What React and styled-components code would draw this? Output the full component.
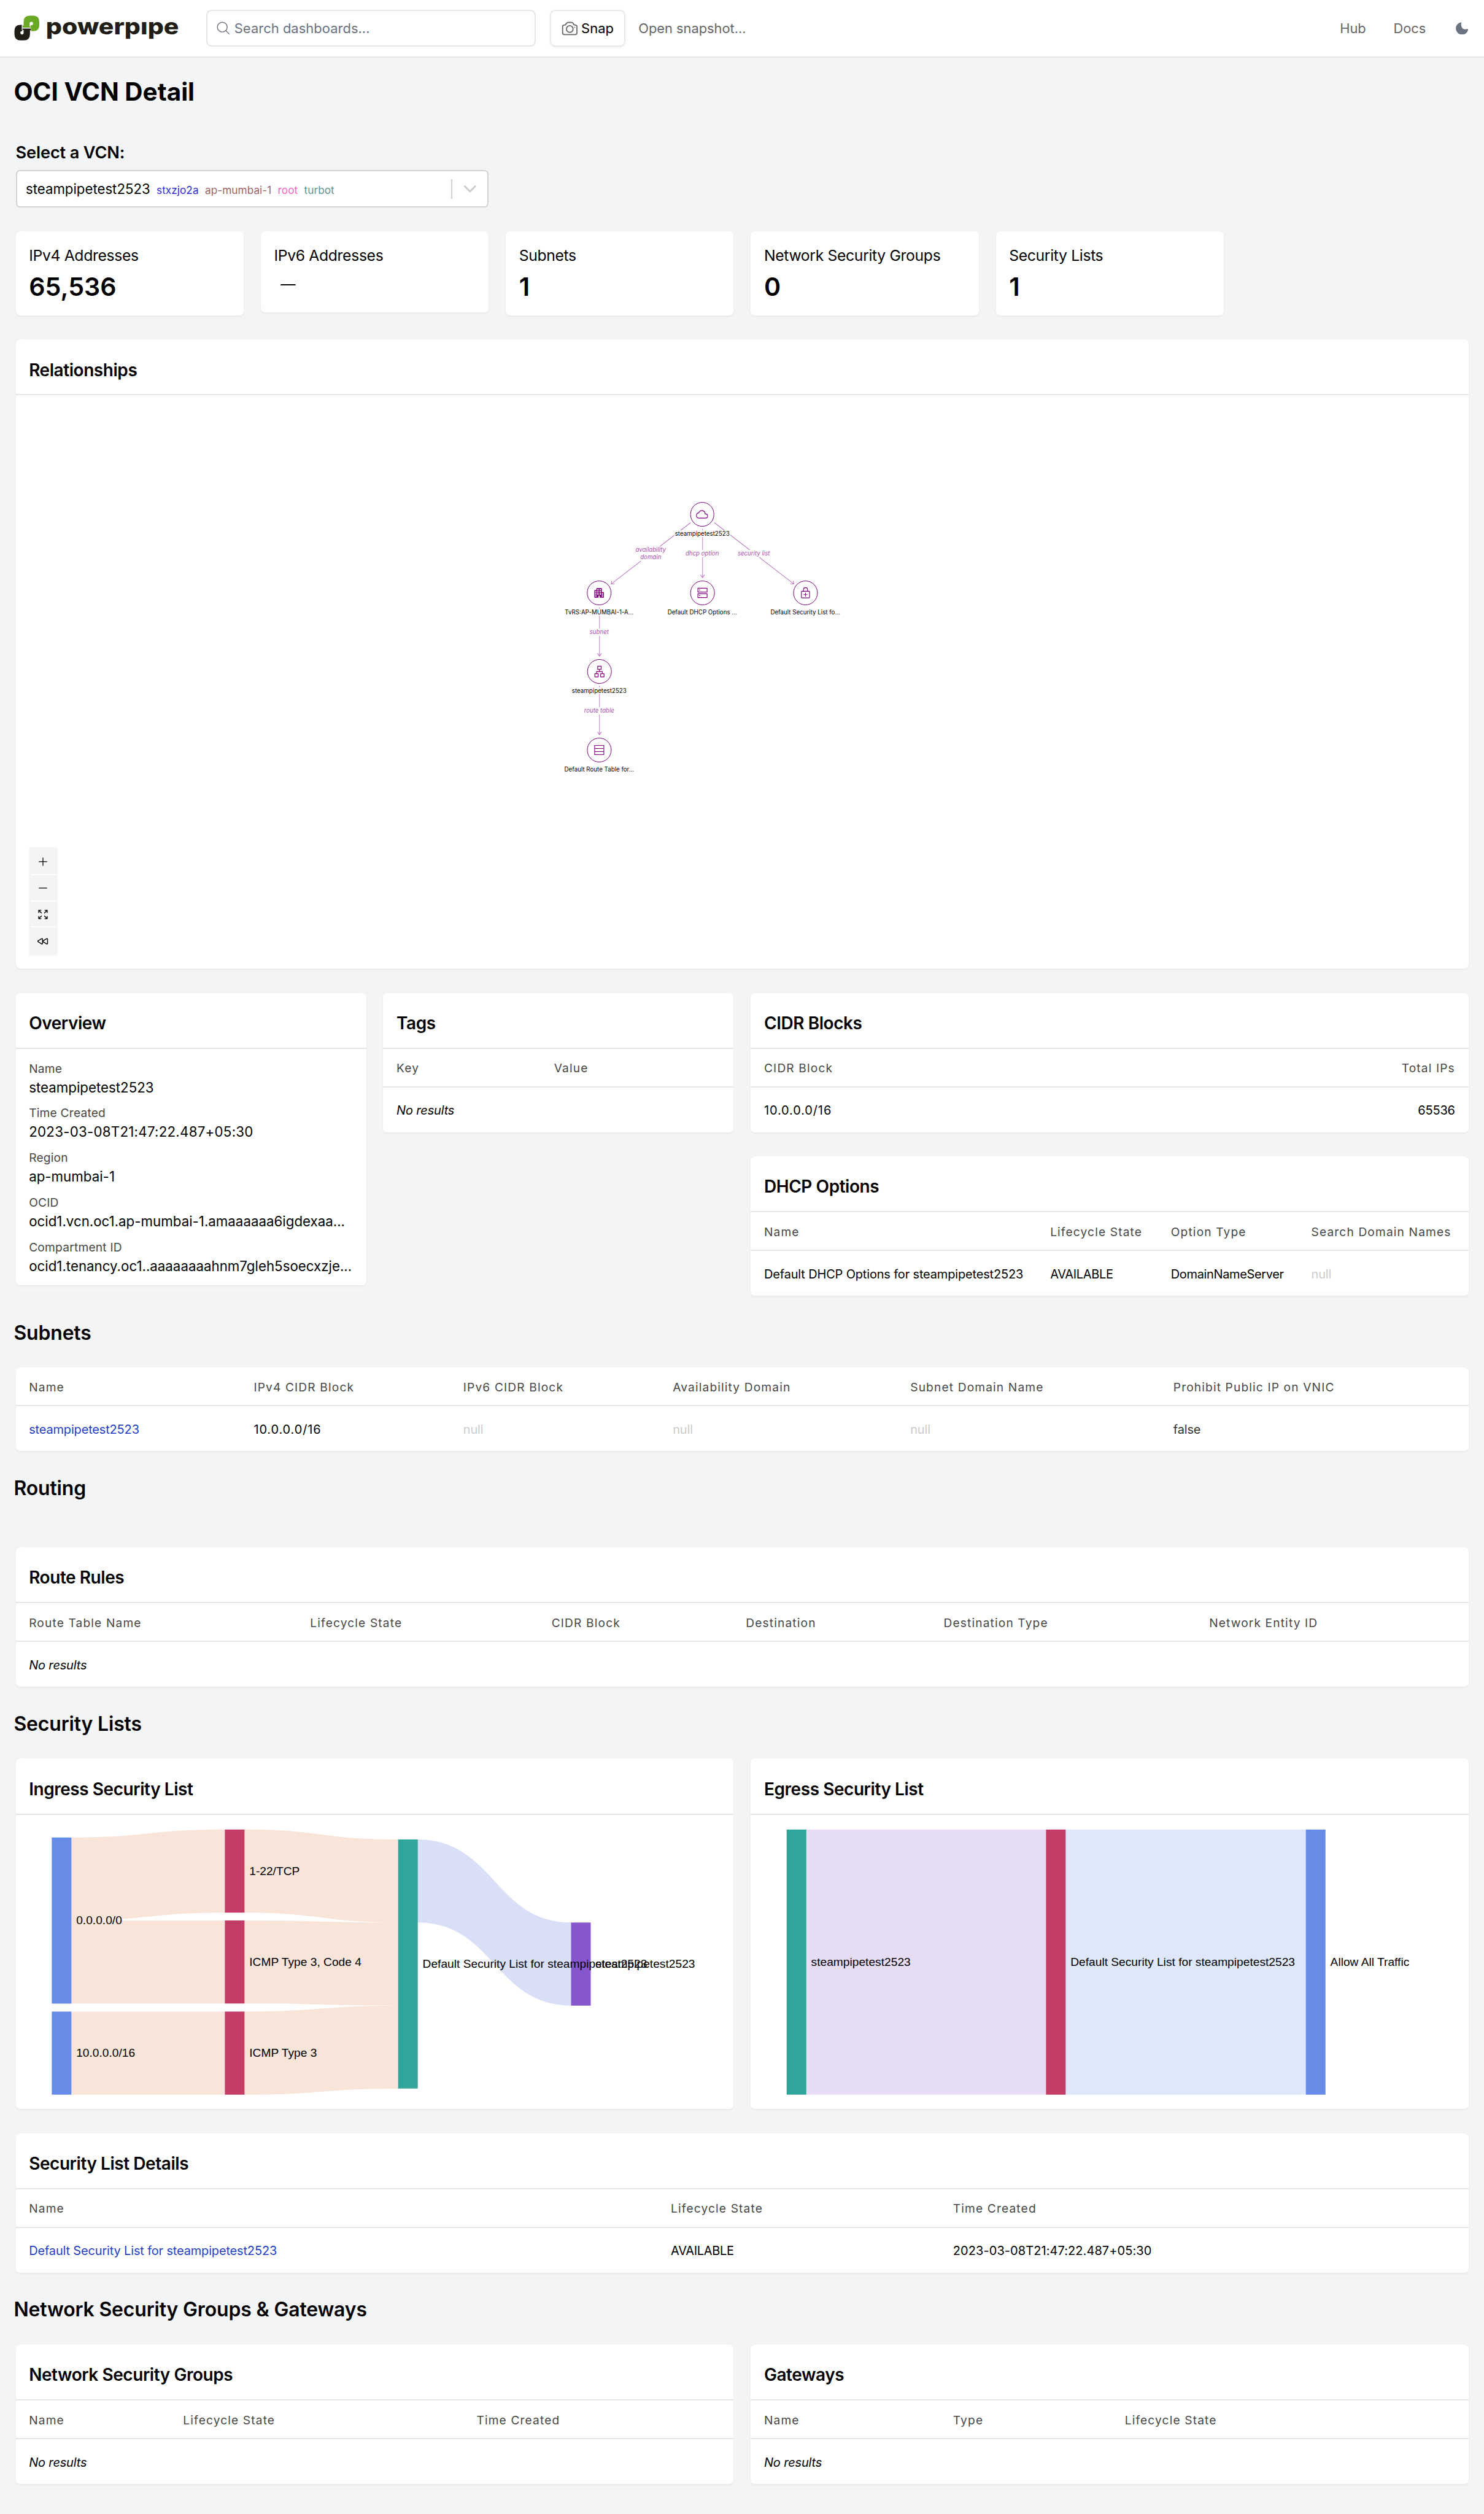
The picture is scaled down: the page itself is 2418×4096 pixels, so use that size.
import React from "react";
import styled, { createGlobalStyle, css } from "styled-components";

/* Layout units are device pixels of a 3024-wide retina page. */
const u = (n) => `${(n * 0.799603).toFixed(2)}px`;

const color = {
  page: "#f2f4f6",
  line: "#e3e6eb",
  text: "#000",
  light: "#474747",
  muted: "#666",
  gray: "#6b7280",
  link: "#1f3fc4",
  none: "#ccc",
  node: "#800080",
  edge: "#cfa3d1",
  edgeText: "#ad4fae",
};

const GlobalStyle = createGlobalStyle`
  *, *::before, *::after { box-sizing: border-box; }
  body {
    margin: 0;
    background: ${color.page};
    color: ${color.text};
    font-family: Inter, "Noto Sans", sans-serif;
    font-size: ${u(28)};
  }
  h1, h2, h3, p { margin: 0; }
`;

const Page = styled.div`
  width: 2418px;
  height: 4096px;
  display: flex;
  flex-direction: column;
  overflow: hidden;
`;

/* ---------- header ---------- */

const Header = styled.header`
  flex: none;
  display: flex;
  align-items: center;
  height: ${u(118)};
  padding: 0 ${u(32)} 0 ${u(29)};
  background: #fff;
  border-bottom: 2px solid ${color.line};
`;

const Logo = styled.a`
  display: flex;
  align-items: center;
  width: ${u(391)};
`;

const Mark = styled.svg`
  width: ${u(52)};
  height: ${u(52)};
  flex: none;
  margin-right: ${u(11)};
`;

const Wordmark = styled.svg`
  width: ${u(275)};
  height: ${u(80)};
  font-weight: 800;
  font-size: 46px;
`;

const SearchBox = styled.div`
  display: flex;
  align-items: center;
  gap: ${u(7)};
  width: ${u(672)};
  height: ${u(75)};
  padding-left: ${u(16)};
  border: 2px solid ${color.line};
  border-radius: ${u(11)};
  font-size: ${u(27.5)};
  color: ${color.gray};
`;

const SnapButton = styled.div`
  display: flex;
  align-items: center;
  gap: ${u(6)};
  width: ${u(154)};
  height: ${u(75)};
  margin-left: ${u(28)};
  padding-left: ${u(20)};
  border: 2px solid #e9e9ea;
  border-radius: ${u(11)};
  box-shadow: 0 ${u(2)} ${u(4)} rgba(0, 0, 0, 0.06);
  font-size: ${u(27.5)};
  svg { color: ${color.muted}; }
`;

const HeaderLink = styled.a`
  margin-left: ${(p) => u(p.$gap)};
  color: ${color.muted};
  font-size: ${u(27.3)};
`;

const Spacer = styled.div`
  flex: 1;
`;

const Icon = styled.svg`
  flex: none;
  width: ${(p) => u(p.$size)};
  height: ${(p) => u(p.$size)};
  fill: none;
  stroke: currentColor;
  stroke-width: ${(p) => p.$weight || 1.5};
  stroke-linecap: round;
  stroke-linejoin: round;
`;

const Moon = styled.svg`
  width: ${u(25.5)};
  height: ${u(25)};
  margin-left: ${u(61)};
  fill: ${color.gray};
`;

/* ---------- page body ---------- */

const Main = styled.main`
  display: flex;
  flex-direction: column;
  padding: 0 ${u(31)} 0 ${u(32)};
`;

const Title = styled.h1`
  height: ${u(138)};
  margin-left: ${u(-4)};
  padding-top: ${u(38)};
  font-size: ${u(50.6)};
  line-height: ${u(62)};
  font-weight: 700;
`;

const Heading = styled.h2`
  height: ${u(49)};
  margin-left: ${u(-4)};
  margin-top: ${u(49)};
  padding-top: ${u(2)};
  font-size: ${u(40)};
  line-height: ${u(49)};
  letter-spacing: ${u(-0.2)};
  font-weight: 600;
  white-space: nowrap;
`;

const Grid = styled.div`
  display: grid;
  grid-template-columns: repeat(12, minmax(0, 1fr));
  column-gap: ${u(35)};
  row-gap: ${u(49)};
  margin-top: ${u(49)};
  align-items: start;
`;

const Stack = styled.div`
  grid-column: span ${(p) => p.$span};
  display: flex;
  flex-direction: column;
  gap: ${u(49)};
`;

const Field = styled.div`
  display: flex;
  flex-direction: column;
  width: ${u(963.5)};
`;

const FieldLabel = styled.label`
  height: ${u(91)};
  padding-top: ${u(33)};
  font-size: ${u(34)};
  line-height: ${u(44)};
  letter-spacing: ${u(-0.2)};
  font-weight: 600;
`;

const Select = styled.div`
  display: flex;
  align-items: center;
  height: ${u(76)};
  padding-left: ${u(18)};
  background: #fff;
  border: 2px solid #d0d2d4;
  border-radius: ${u(8)};
  white-space: nowrap;
`;

const SelectValue = styled.span`
  margin-right: ${u(13)};
  font-size: ${u(27.8)};
`;

const Tag = styled.span`
  margin: ${u(5)} ${u(13)} 0 0;
  font-size: ${u(21.6)};
  color: ${(p) => p.$color};
`;

const SelectArrow = styled.div`
  display: flex;
  align-items: center;
  justify-content: center;
  width: ${u(74)};
  height: ${u(40)};
  margin-left: auto;
  border-left: 2px solid #d2d2d2;
  color: #ccc;
`;

const surface = css`
  background: #fff;
  border-radius: ${u(9)};
  box-shadow: 0 ${u(2)} ${u(4)} rgba(0, 0, 0, 0.05);
`;

const Card = styled.div`
  ${surface}
  grid-column: span 2;
  height: ${(p) => u(p.$short ? 164 : 171)};
  padding: ${u(28)} ${u(27)} 0;
`;

const CardLabel = styled.div`
  font-size: ${u(31)};
  line-height: ${u(42)};
  letter-spacing: ${u(-0.48)};
  white-space: nowrap;
`;

const CardValue = styled.div`
  display: flex;
  align-items: center;
  height: ${u(62)};
  margin-top: ${u(11)};
  font-size: ${u(51.5)};
  font-weight: 600;
`;

const Dash = styled.svg`
  width: ${u(31)};
  height: ${u(3)};
  margin: 0 0 ${u(8)} ${u(13)};
  fill: #000;
`;

const Panel = styled.section`
  ${surface}
  grid-column: span ${(p) => p.$span || 12};
  height: ${(p) => (p.$height ? u(p.$height) : "auto")};
`;

const PanelTitle = styled.h3`
  height: ${u(114)};
  padding: ${u(8)} ${u(27)} 0;
  border-bottom: 2px solid ${color.line};
  font-size: ${u(35)};
  line-height: ${u(108)};
  letter-spacing: ${u(-0.55)};
  font-weight: 600;
`;

/* ---------- tables ---------- */

const Row = styled.div`
  display: grid;
  grid-template-columns: ${(p) => p.$cols};
  align-items: center;
  padding: ${u(3)} ${u(28)} 0 ${u(27)};
  white-space: nowrap;
`;

const HeadRow = styled(Row)`
  height: ${u(79)};
  border-bottom: 2px solid ${color.line};
`;

const BodyRow = styled(Row)`
  height: ${u(91)};
`;

const Th = styled.span`
  font-size: ${u(24)};
  letter-spacing: ${u(1.4)};
  color: ${color.light};
  text-align: ${(p) => (p.$right ? "right" : "left")};
`;

const Td = styled.span`
  font-size: ${u(25)};
  letter-spacing: ${(p) => u(p.$track || -0.2)};
  text-align: ${(p) => (p.$right ? "right" : "left")};
  color: ${(p) => p.$color || color.text};
  font-style: ${(p) => (p.$italic ? "italic" : "normal")};
`;

/* starts: x of every column after the first, from the text edge of the panel */
const template = (starts) => {
  if (!starts.length) return "1fr";
  const widths = starts.map((s, i) => u(s - (i ? starts[i - 1] : 0)));
  return [...widths, "1fr"].join(" ");
};

function Table({ title, span, head, starts, cells }) {
  const cols = template(starts);
  return (
    <Panel $span={span}>
      {title && <PanelTitle>{title}</PanelTitle>}
      <HeadRow $cols={cols}>
        {head.map((h) => (
          <Th key={h} $right={h === "Total IPs"}>{h}</Th>
        ))}
      </HeadRow>
      <BodyRow $cols={cells ? cols : "1fr"}>
        {cells ? (
          cells.map((c, i) => (
            <Td key={i} $color={c.color} $track={c.track} $right={c.right}>{c.text}</Td>
          ))
        ) : (
          <Td $italic>No results</Td>
        )}
      </BodyRow>
    </Panel>
  );
}

const nil = { text: "null", color: color.none };

/* ---------- overview ---------- */

const Details = styled.dl`
  margin: 0;
  padding: ${u(20)} ${u(26)} ${u(8)} ${u(27)};
`;

const Detail = styled.div`
  height: ${u(91)};
  white-space: nowrap;
`;

const Term = styled.dt`
  font-size: ${u(24)};
  line-height: ${u(42)};
  letter-spacing: ${u(0.25)};
  color: ${color.light};
`;

const Value = styled.dd`
  margin: ${u(-2)} 0 0;
  font-size: ${u(27.9)};
  line-height: ${u(38)};
  letter-spacing: ${(p) => u(p.$track || 0)};
`;

const overview = [
  ["Name", "steampipetest2523"],
  ["Time Created", "2023-03-08T21:47:22.487+05:30", 0.3],
  ["Region", "ap-mumbai-1"],
  ["OCID", "ocid1.vcn.oc1.ap-mumbai-1.amaaaaaa6igdexaa..."],
  ["Compartment ID", "ocid1.tenancy.oc1..aaaaaaaahnm7gleh5soecxzje..."],
];

/* ---------- relationship graph ---------- */

const GraphCanvas = styled.div`
  position: relative;
  height: ${u(1168)};
`;

const EdgeLayer = styled.svg`
  position: absolute;
  inset: 0;
  width: 100%;
  height: 100%;
  fill: none;
  stroke: ${color.edge};
  stroke-width: 1.7;
`;

const GraphNode = styled.div`
  position: absolute;
  left: ${(p) => u(p.$x)};
  top: ${(p) => u(p.$y)};
  transform: translate(-50%, ${u(-25)});
  display: flex;
  flex-direction: column;
  align-items: center;
`;

const NodeCircle = styled.div`
  display: flex;
  align-items: center;
  justify-content: center;
  width: ${u(50)};
  height: ${u(50)};
  border: 1px solid ${color.node};
  border-radius: 50%;
  background: #fff;
  color: ${color.node};
`;

const NodeLabel = styled.span`
  margin-top: ${u(8)};
  padding: 0 ${u(1)};
  background: #fff;
  font-size: ${u(12.2)};
  line-height: ${u(14)};
  white-space: nowrap;
`;

const EdgeLabel = styled.span`
  position: absolute;
  left: ${(p) => u(p.$x)};
  top: ${(p) => u(p.$y)};
  transform: translate(-50%, -50%);
  background: #fff;
  color: ${color.edgeText};
  font-size: ${u(12.1)};
  line-height: ${u(15)};
  font-style: italic;
  text-align: center;
  white-space: pre;
`;

const Controls = styled.div`
  position: absolute;
  left: ${u(29)};
  bottom: ${u(29)};
  display: flex;
  flex-direction: column;
  width: ${u(54)};
  padding: 1px;
  background: #f3f4f6;
  box-shadow: 0 0 ${u(4)} 1px rgba(0, 0, 0, 0.08);
`;

const Control = styled.div`
  display: flex;
  align-items: center;
  justify-content: center;
  height: ${u(53.4)};
  padding-top: ${u(1)};
  border-bottom: ${(p) => (p.$last ? "none" : "2px solid #fff")};
`;

const icons = {
  cloud: <path d="M5.8 19.3H19a4 4 0 0 0 .3-8h-1.1v-1.1A6.3 6.3 0 0 0 6 8.8a5.3 5.3 0 0 0-.2 10.5Z" />,
  building: (
    <path
      fill="currentColor"
      stroke="none"
      d="M17.4 11V2.6H6.6v4H2.6v14.8h8.2v-4h2.4v4h8.2V10.6h-4zM6.7 19.2H4.3v-2.5h2.4zm0-4H4.3v-2.5h2.4zm0-4H4.3V8.7h2.4zm4.3 4H8.4v-2.5h2.6zm0-4H8.4V8.7h2.6zm0-4H8.4V4.7h2.6zm4.600 8h-2.600v-2.500h2.600zm0-4h-2.600V8.700h2.600zm0-4h-2.600V4.700h2.600zm4.100 12h-2.400v-2.500h2.400zm0-4h-2.400v-2.500h2.400z"
    />
  ),
  servers: (
    <>
      <rect x="3" y="2.8" width="18" height="7.6" />
      <rect x="3" y="13.6" width="18" height="7.6" />
      <path d="M6 6.2h.6M6 17h.6" strokeWidth="1.8" />
    </>
  ),
  lock: (
    <>
      <rect x="4" y="8.8" width="16" height="13" rx="1" />
      <path d="M8 8.8V5.6a4 4 0 0 1 8 0v3.2M12 12v6.6M8.7 15.3h6.6" />
    </>
  ),
  subnet: (
    <path d="M8.6 1.6h6.8v6.2H8.6zM3 16.4h6.6v6.2H3zM14.4 16.4H21v6.2h-6.6zM12 7.8v4.4M6.3 16.4v-4.2h11.4v4.2" />
  ),
  rows: <path d="M3 3h18v18H3zM3 9h18M3 15h18" strokeLinejoin="miter" />,
};

/* Positions are relative to the canvas' top-left corner. */
const nodes = [
  { x: 1399, y: 242, icon: "cloud", label: "steampipetest2523" },
  { x: 1189, y: 402, icon: "building", label: "TvRS:AP-MUMBAI-1-A..." },
  { x: 1399, y: 402, icon: "servers", label: "Default DHCP Options ..." },
  { x: 1609, y: 402, icon: "lock", label: "Default Security List fo..." },
  { x: 1189, y: 562, icon: "subnet", label: "steampipetest2523" },
  { x: 1189, y: 722, icon: "rows", label: "Default Route Table for..." },
];

const edgeLabels = [
  { x: 1294, y: 322.5, text: "availability\ndomain" },
  { x: 1399, y: 322.5, text: "dhcp option" },
  { x: 1504, y: 322.5, text: "security list" },
  { x: 1189, y: 482, text: "subnet" },
  { x: 1189, y: 642.5, text: "route table" },
];

function Graph() {
  return (
    <GraphCanvas>
      <EdgeLayer viewBox="0 0 2961 1168" preserveAspectRatio="none">
        <path d="M1399 272V371M1189 432V531M1189 592V691" />
        <path d="M1375 259.5L1213 384.5M1423 259.5L1585 384.5" stroke="#bb77be" strokeWidth="1.3" />
        <g stroke="#bb77be" strokeWidth="1.4">
          <path d="M1395 366l4 5.5 4-5.5M1185 526l4 5.5 4-5.5M1185 686l4 5.5 4-5.5" />
          <path d="M1214 378l-1 6.5 7-.3M1584 378l1 6.5-7-.3" />
        </g>
      </EdgeLayer>
      {edgeLabels.map((e) => (
        <EdgeLabel key={e.text} $x={e.x} $y={e.y}>{e.text}</EdgeLabel>
      ))}
      {nodes.map((n) => (
        <GraphNode key={n.label + n.y} $x={n.x} $y={n.y}>
          <NodeCircle>
            <Icon viewBox="0 0 24 24" $size={25} $weight={1.4}>{icons[n.icon]}</Icon>
          </NodeCircle>
          <NodeLabel>{n.label}</NodeLabel>
        </GraphNode>
      ))}
      <Controls>
        <Control>
          <Icon viewBox="0 0 24 24" $size={25}><path d="M12 4.5v15m7.5-7.5h-15" /></Icon>
        </Control>
        <Control>
          <Icon viewBox="0 0 24 24" $size={25}><path d="M19.5 12h-15" /></Icon>
        </Control>
        <Control>
          <Icon viewBox="0 0 24 24" $size={25} $weight={1.7}>
            <path d="M3.75 3.75v4.5m0-4.5h4.5m-4.5 0L9 9M3.75 20.25v-4.5m0 4.5h4.5m-4.5 0L9 15M20.25 3.75h-4.5m4.5 0v4.5m0-4.5L15 9m5.25 11.25h-4.5m4.5 0v-4.5m0 4.5L15 15" />
          </Icon>
        </Control>
        <Control $last>
          <Icon viewBox="0 0 24 24" $size={25} $weight={1.7}>
            <path d="M21 16.811c0 .864-.933 1.406-1.683.977l-7.108-4.061a1.125 1.125 0 0 1 0-1.954l7.108-4.061A1.125 1.125 0 0 1 21 8.689v8.122ZM11.25 16.811c0 .864-.933 1.406-1.683.977l-7.108-4.061a1.125 1.125 0 0 1 0-1.954l7.108-4.061a1.125 1.125 0 0 1 1.683.977v8.122Z" />
          </Icon>
        </Control>
      </Controls>
    </GraphCanvas>
  );
}

/* ---------- flow charts ---------- */

const Chart = styled.svg`
  display: block;
  width: 100%;
  height: ${u(600)};
  font-family: "Liberation Sans", Arial, sans-serif;
  font-size: 24px;
`;

const BLUE = "#678ce8";
const RED = "#c23e67";
const TEAL = "#30a599";
const PURPLE = "#8656cd";
const PEACH = "#f8e4d9";

const ingress = {
  nodes: [
    [73, 46, 338.5, BLUE, "0.0.0.0/0"],
    [73, 400.7, 169.3, BLUE, "10.0.0.0/16"],
    [425.7, 29.8, 169.3, RED, "1-22/TCP"],
    [425.7, 215, 169.3, RED, "ICMP Type 3, Code 4"],
    [425.7, 400.7, 169.3, RED, "ICMP Type 3"],
    [778.8, 50, 507.5, TEAL, "Default Security List for steampipetest2523"],
    [1131.2, 219.3, 169.3, PURPLE, "steampipetest2523"],
  ],
  links: [
    [113, 46, 426, 29.8, PEACH],
    [113, 215, 426, 215, PEACH],
    [113, 400.7, 426, 400.7, PEACH],
    [465, 29.8, 779, 50, PEACH],
    [465, 215, 779, 219.3, PEACH],
    [465, 400.7, 779, 388.5, PEACH],
    [818, 50, 1132, 219.3, "#d9dff6"],
  ],
  depth: 169.3,
};

const egress = {
  nodes: [
    [73.5, 29.8, 540.2, TEAL, "steampipetest2523"],
    [602, 29.8, 540.2, RED, "Default Security List for steampipetest2523"],
    [1131.5, 29.8, 540.2, BLUE, "Allow All Traffic"],
  ],
  links: [
    [113, 29.8, 602, 29.8, "#e6dcf4"],
    [641, 29.8, 1132, 29.8, "#dfe8fb"],
  ],
  depth: 540.2,
};

const ribbon = (x0, y0, x1, y1, h) => {
  const m = (x0 + x1) / 2;
  return `M${x0} ${y0}C${m} ${y0} ${m} ${y1} ${x1} ${y1}V${y1 + h}C${m} ${y1 + h} ${m} ${y0 + h} ${x0} ${y0 + h}Z`;
};

function FlowChart({ title, data }) {
  return (
    <Panel $span={6} $height={714}>
      <PanelTitle>{title}</PanelTitle>
      <Chart viewBox="0 0 1463 600" preserveAspectRatio="none">
        {data.links.map(([x0, y0, x1, y1, fill], i) => (
          <path key={i} d={ribbon(x0, y0, x1, y1, data.depth)} fill={fill} />
        ))}
        {data.nodes.map(([x, y, h, fill, label]) => (
          <rect key={label} x={x} y={y} width="40" height={h} fill={fill} />
        ))}
        {data.nodes.map(([x, y, h, , label]) => (
          <text key={label} x={x + 49.8} y={y + h / 2 + 8}>{label}</text>
        ))}
      </Chart>
    </Panel>
  );
}

/* ---------- page ---------- */

const cards = [
  ["IPv4 Addresses", "65,536"],
  ["IPv6 Addresses", null],
  ["Subnets", "1"],
  ["Network Security Groups", "0"],
  ["Security Lists", "1"],
];

export default function App() {
  return (
    <Page>
      <GlobalStyle />
      <Header>
        <Logo>
          <Mark viewBox="0 0 156 156">
            <path fill="#69a923" d="M58 62V40Q58 2 96 2H117Q154 2 154 40V60Q154 97 117 97H108Q103 97 103 92V75H52V64Z" />
            <path fill="#fff" d="M95 50a10.5 10.5 0 1 1 10 10q-7 2-4 9h-6z" />
            <path fill="#211e17" d="M97 92V114Q97 153 60 153H39Q2 153 2 114V95Q2 58 39 58H50V81H102V90Z" />
            <path fill="#fff" d="M58 106a10 10 0 1 1-11-9q5-2 2-8h9zM47 58h4v32h-4z" />
          </Mark>
          <Wordmark viewBox="0 0 275 80">
            <text x="1" y="53" textLength="271" lengthAdjust="spacingAndGlyphs" fill="#211e17">powerpipe</text>
            <rect width="275" height="25.6" fill="#fff" />
          </Wordmark>
        </Logo>
        <SearchBox>
          <Icon viewBox="0 0 24 24" $size={32} $weight={1.3} stroke="#555">
            <path d="m21 21-5.197-5.197m0 0A7.5 7.5 0 1 0 5.196 5.196a7.5 7.5 0 0 0 10.607 10.607Z" />
          </Icon>
          Search dashboards...
        </SearchBox>
        <SnapButton>
          <Icon viewBox="0 0 24 24" $size={36}>
            <path d="M6.827 6.175A2.31 2.31 0 0 1 5.186 7.23c-.38.054-.757.112-1.134.175C2.999 7.58 2.25 8.507 2.25 9.574V18a2.25 2.25 0 0 0 2.25 2.25h15A2.25 2.25 0 0 0 21.75 18V9.574c0-1.067-.75-1.994-1.802-2.169a47.865 47.865 0 0 0-1.134-.175 2.31 2.31 0 0 1-1.64-1.055l-.822-1.316a2.192 2.192 0 0 0-1.736-1.039 48.774 48.774 0 0 0-5.232 0 2.192 2.192 0 0 0-1.736 1.039l-.821 1.316Z" />
            <path d="M16.5 12.75a4.5 4.5 0 1 1-9 0 4.5 4.5 0 0 1 9 0ZM18.75 10.5h.008v.008h-.008V10.5Z" />
          </Icon>
          Snap
        </SnapButton>
        <HeaderLink $gap={27}>Open snapshot...</HeaderLink>
        <Spacer />
        <HeaderLink $gap={0}>Hub</HeaderLink>
        <HeaderLink $gap={56}>Docs</HeaderLink>
        <Moon viewBox="0 0 76 75">
          <path d="M35 1C28 24 38 48 62 43L76 42A38 38 0 1 1 35 1Z" />
        </Moon>
      </Header>

      <Main>
        <Title>OCI VCN Detail</Title>
        <Field>
          <FieldLabel>Select a VCN:</FieldLabel>
          <Select>
            <SelectValue>steampipetest2523</SelectValue>
            <Tag $color="#2f2fd0">stxzjo2a</Tag>
            <Tag $color="#9c6666">ap-mumbai-1</Tag>
            <Tag $color="#f566c4">root</Tag>
            <Tag $color="#5f9494">turbot</Tag>
            <SelectArrow>
              <Icon viewBox="0 0 24 24" $size={32} $weight={2.6}><path d="m4 8 8 8 8-8" /></Icon>
            </SelectArrow>
          </Select>
        </Field>

        <Grid>
          {cards.map(([label, value]) => (
            <Card key={label} $short={value === null}>
              <CardLabel>{label}</CardLabel>
              <CardValue>
                {value ?? (
                  <Dash viewBox="0 0 31 3">
                    <rect width="31" height="3" rx="1.5" />
                  </Dash>
                )}
              </CardValue>
            </Card>
          ))}
          <Panel $height={1282}>
            <PanelTitle>Relationships</PanelTitle>
            <Graph />
          </Panel>
          <Panel $span={3} $height={596}>
            <PanelTitle>Overview</PanelTitle>
            <Details>
              {overview.map(([term, value, track]) => (
                <Detail key={term}>
                  <Term>{term}</Term>
                  <Value $track={track}>{value}</Value>
                </Detail>
              ))}
            </Details>
          </Panel>
          <Table title="Tags" span={3} head={["Key", "Value"]} starts={[321]} />
          <Stack $span={6}>
            <Table
              title="CIDR Blocks"
              head={["CIDR Block", "Total IPs"]}
              starts={[700]}
              cells={[
                { text: "10.0.0.0/16", track: 1.1 },
                { text: "65536", right: true },
              ]}
            />
            <Table
              title="DHCP Options"
              head={["Name", "Lifecycle State", "Option Type", "Search Domain Names"]}
              starts={[583, 829, 1115]}
              cells={[
                { text: "Default DHCP Options for steampipetest2523" },
                { text: "AVAILABLE", track: -0.4 },
                { text: "DomainNameServer", track: -0.45 },
                nil,
              ]}
            />
          </Stack>
        </Grid>

        <Heading>Subnets</Heading>
        <Grid>
          <Table
            head={["Name", "IPv4 CIDR Block", "IPv6 CIDR Block", "Availability Domain", "Subnet Domain Name", "Prohibit Public IP on VNIC"]}
            starts={[458, 885, 1312, 1796, 2332]}
            cells={[
              { text: "steampipetest2523", color: color.link },
              { text: "10.0.0.0/16", track: 1.1 },
              nil,
              nil,
              nil,
              { text: "false", color: "#333" },
            ]}
          />
        </Grid>

        <Heading>Routing</Heading>
        <Grid>
          <Stack $span={12} />
          <Table
            title="Route Rules"
            head={["Route Table Name", "Lifecycle State", "CIDR Block", "Destination", "Destination Type", "Network Entity ID"]}
            starts={[573, 1065, 1461, 1864, 2405]}
          />
        </Grid>

        <Heading>Security Lists</Heading>
        <Grid>
          <FlowChart title="Ingress Security List" data={ingress} />
          <FlowChart title="Egress Security List" data={egress} />
          <Table
            title="Security List Details"
            head={["Name", "Lifecycle State", "Time Created"]}
            starts={[1308, 1883]}
            cells={[
              { text: "Default Security List for steampipetest2523", color: color.link },
              { text: "AVAILABLE", track: -0.4 },
              { text: "2023-03-08T21:47:22.487+05:30", track: 0.1 },
            ]}
          />
        </Grid>

        <Heading>Network Security Groups &amp; Gateways</Heading>
        <Grid>
          <Table
            title="Network Security Groups"
            span={6}
            head={["Name", "Lifecycle State", "Time Created"]}
            starts={[314, 912]}
          />
          <Table
            title="Gateways"
            span={6}
            head={["Name", "Type", "Lifecycle State"]}
            starts={[385, 735]}
          />
        </Grid>
      </Main>
    </Page>
  );
}
